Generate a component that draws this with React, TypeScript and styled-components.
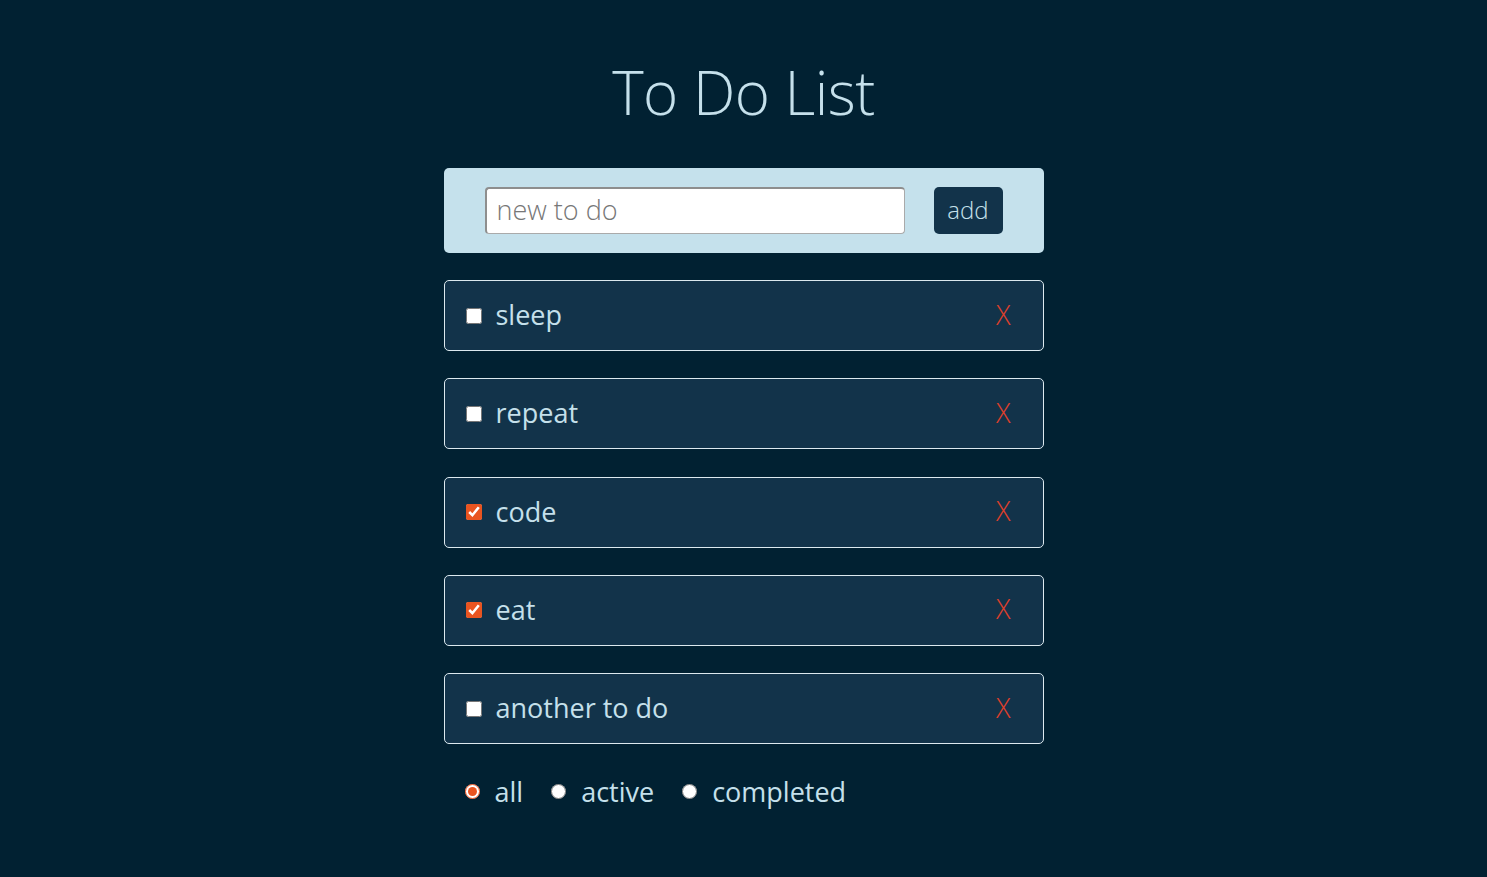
import React, { useState } from "react";
import styled, { createGlobalStyle } from "styled-components";

const GlobalStyle = createGlobalStyle`
  html, body {
    margin: 0;
    padding: 0;
    background-color: #012132;
  }
  body {
    font-family: "Open Sans", "Noto Sans", sans-serif;
    color: #c5e0eb;
  }
`;

const Page = styled.div`
  display: flex;
  flex-direction: column;
  align-items: center;
  min-height: 877px;
  box-sizing: border-box;
  padding-top: 52px;
`;

const Title = styled.h1`
  margin: 0 0 36px;
  font-size: 60px;
  font-weight: 300;
  line-height: 80px;
  color: #c5e0eb;
  letter-spacing: -0.5px;
`;

const Container = styled.div`
  width: 600px;
  display: flex;
  flex-direction: column;
`;

const Form = styled.form`
  display: flex;
  align-items: center;
  justify-content: center;
  gap: 29px;
  height: 85px;
  background-color: #c5e1ec;
  border-radius: 5px;
  margin-bottom: 27px;
`;

const Input = styled.input`
  box-sizing: border-box;
  width: 420px;
  height: 47px;
  padding: 0 10px 4px;
  font-family: inherit;
  font-size: 27px;
  font-weight: 300;
  color: #333;
  background: #fff;
  border: 1px solid #aaa;
  border-top: 2px solid #8e8e8e;
  border-left: 2px solid #8e8e8e;
  border-radius: 4px;
  outline: none;

  &::placeholder {
    color: #777;
  }
`;

const AddButton = styled.button`
  height: 47px;
  width: 69px;
  padding: 0 0 2px;
  border: none;
  border-radius: 5px;
  background-color: #12334a;
  color: #c5e0eb;
  font-family: inherit;
  font-size: 24px;
  font-weight: 300;
  cursor: pointer;
`;

const List = styled.ul`
  list-style: none;
  margin: 0;
  padding: 0;
  display: flex;
  flex-direction: column;
  gap: 27.25px;
`;

const Item = styled.li`
  box-sizing: border-box;
  display: flex;
  align-items: center;
  height: 71px;
  padding: 0 21px;
  background-color: #12334a;
  border: 1px solid #dce9ef;
  border-radius: 5px;
`;

const Check = styled.input`
  width: 16px;
  height: 16px;
  margin: 0 14px 0 0;
  accent-color: #e95420;
`;

const Label = styled.span`
  flex: 1;
  font-size: 27px;
  color: #c5e0eb;
  padding-bottom: 2px;
`;

const Remove = styled.button`
  background: none;
  border: none;
  padding: 0 0 3px;
  margin-right: 11px;
  color: #e0402a;
  font-family: inherit;
  font-size: 27px;
  font-weight: 300;
  cursor: pointer;
`;

const Filters = styled.div`
  display: flex;
  align-items: center;
  gap: 28px;
  padding: 29px 0 0 21px;
`;

const FilterLabel = styled.label`
  display: flex;
  align-items: center;
  gap: 15px;
  font-size: 27px;
  color: #c5e0eb;
  cursor: pointer;
`;

const Radio = styled.input`
  width: 15px;
  height: 15px;
  margin: 0;
  accent-color: #e95420;
`;

type Todo = { id: number; text: string; done: boolean };
type Filter = "all" | "active" | "completed";

const App = () => {
  const [text, setText] = useState("");
  const [filter, setFilter] = useState<Filter>("all");
  const [todos, setTodos] = useState<Todo[]>([
    { id: 1, text: "sleep", done: false },
    { id: 2, text: "repeat", done: false },
    { id: 3, text: "code", done: true },
    { id: 4, text: "eat", done: true },
    { id: 5, text: "another to do", done: false },
  ]);

  const handleAdd = (e: React.FormEvent) => {
    e.preventDefault();
    if (!text.trim()) return;
    setTodos((prev) => [...prev, { id: Date.now(), text, done: false }]);
    setText("");
  };

  const toggle = (id: number) =>
    setTodos((prev) =>
      prev.map((t) => (t.id === id ? { ...t, done: !t.done } : t))
    );

  const remove = (id: number) =>
    setTodos((prev) => prev.filter((t) => t.id !== id));

  const shown = todos.filter((t) =>
    filter === "all" ? true : filter === "active" ? !t.done : t.done
  );

  return (
    <Page>
      <GlobalStyle />
      <Title>To Do List</Title>
      <Container>
        <Form onSubmit={handleAdd}>
          <Input
            type="text"
            placeholder="new to do"
            value={text}
            onChange={(e) => setText(e.target.value)}
          />
          <AddButton type="submit">add</AddButton>
        </Form>
        <List>
          {shown.map((todo) => (
            <Item key={todo.id}>
              <Check
                type="checkbox"
                checked={todo.done}
                onChange={() => toggle(todo.id)}
              />
              <Label>{todo.text}</Label>
              <Remove onClick={() => remove(todo.id)}>X</Remove>
            </Item>
          ))}
        </List>
        <Filters>
          {(["all", "active", "completed"] as Filter[]).map((f) => (
            <FilterLabel key={f}>
              <Radio
                type="radio"
                name="filter"
                checked={filter === f}
                onChange={() => setFilter(f)}
              />
              {f}
            </FilterLabel>
          ))}
        </Filters>
      </Container>
    </Page>
  );
};

export default App;
